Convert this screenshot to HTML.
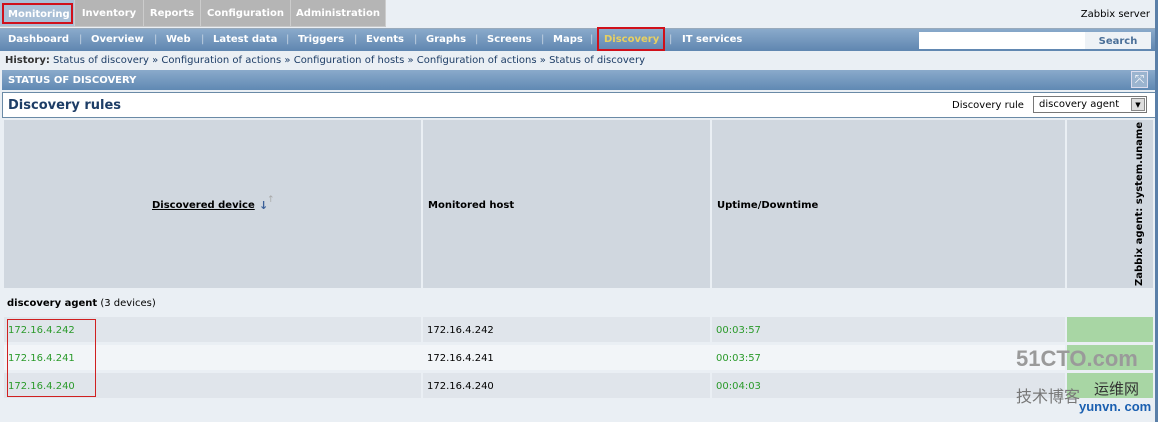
<!DOCTYPE html>
<html><head><style>
*{margin:0;padding:0;box-sizing:border-box}
body{width:1158px;height:422px;background:#eaeff4;font-family:"DejaVu Sans","Liberation Sans",sans-serif;font-size:10px;position:relative;overflow:hidden;color:#000}
.a{position:absolute;white-space:nowrap}
.tab{position:absolute;top:0;height:26px;background:#b5b5b5;color:#fff;font-weight:bold;line-height:28px;text-align:center;font-size:10px;border-right:1px solid #ccc}
.nav{position:absolute;top:28px;left:0;width:1158px;height:23px;background:linear-gradient(#8aaacb,#5f86b0);border-top:1px solid #9ab}
.nav span{position:absolute;top:5px;color:#fff;font-weight:bold;font-size:10px}
.sep{color:#c5d3e2!important;font-weight:normal!important}
.hdr{background:#d0d7df;position:absolute;top:120px;height:168px}
.cell{position:absolute;height:25px;line-height:28px;padding-left:4px;font-size:10px}
</style></head><body>
<div class="a" style="left:0;top:0;width:386px;height:27px;background:#c8c8c8"></div>
<div class="tab" style="left:0;width:75px;background:#a9bfd6;"></div>
<div class="a" style="left:2px;top:3px;width:71px;height:21px;border:2px solid #d0101a;color:#fff;font-weight:bold;line-height:19px;padding-left:4px">Monitoring</div>
<div class="tab" style="left:75px;width:69px">Inventory</div>
<div class="tab" style="left:144px;width:57px">Reports</div>
<div class="tab" style="left:201px;width:90px">Configuration</div>
<div class="tab" style="left:291px;width:95px">Administration</div>
<div class="a" style="right:8px;top:9px">Zabbix server</div>
<div class="nav">
<span style="left:8px">Dashboard</span><span class="sep" style="left:79px">|</span>
<span style="left:91px">Overview</span><span class="sep" style="left:154px">|</span>
<span style="left:166px">Web</span><span class="sep" style="left:201px">|</span>
<span style="left:213px">Latest data</span><span class="sep" style="left:286px">|</span>
<span style="left:298px">Triggers</span><span class="sep" style="left:354px">|</span>
<span style="left:366px">Events</span><span class="sep" style="left:414px">|</span>
<span style="left:426px">Graphs</span><span class="sep" style="left:475px">|</span>
<span style="left:487px">Screens</span><span class="sep" style="left:541px">|</span>
<span style="left:553px">Maps</span><span class="sep" style="left:590px">|</span>
<span style="left:604px;color:#e8d060">Discovery</span><span class="sep" style="left:669px">|</span>
<span style="left:682px">IT services</span>
</div>
<div class="a" style="left:597px;top:27px;width:68px;height:24px;border:2px solid #d0101a"></div>
<div class="a" style="left:919px;top:32px;width:166px;height:17px;background:#fff"></div>
<div class="a" style="left:1085px;top:32px;width:66px;height:17px;background:#eef2f6;color:#4a6f98;font-weight:bold;text-align:center;line-height:19px">Search</div>
<div class="a" style="left:5px;top:55px;color:#1d3d66"><b style="color:#333">History:</b> Status of discovery » Configuration of actions » Configuration of hosts » Configuration of actions » Status of discovery</div>
<div class="a" style="left:2px;top:70px;width:1154px;height:20px;background:linear-gradient(#8aaacb,#6089b3);color:#fff;font-weight:bold;line-height:21px;padding-left:6px">STATUS OF DISCOVERY</div>
<div class="a" style="left:1131px;top:71px;width:17px;height:17px;border:1px solid #dde;background:#9bb4cf;color:#fff;font-size:12px;line-height:15px;text-align:center">⤧</div>
<div class="a" style="left:2px;top:92px;width:1154px;height:26px;background:#fff;border:1px solid #6a8aa6"></div>
<div class="a" style="left:8px;top:98px;font-size:13px;font-weight:bold;color:#1d3d66">Discovery rules</div>
<div class="a" style="left:952px;top:100px">Discovery rule</div>
<div class="a" style="left:1033px;top:96px;width:114px;height:17px;border:1px solid #777;background:#fff;padding-left:5px;line-height:16px">discovery agent</div>
<div class="a" style="left:1131px;top:98px;width:14px;height:13px;border:1px solid #888;background:#ddd;font-size:7px;text-align:center;line-height:12px">▼</div>
<div class="hdr" style="left:4px;width:417px"></div>
<div class="hdr" style="left:423px;width:287px"></div>
<div class="hdr" style="left:712px;width:353px"></div>
<div class="hdr" style="left:1067px;width:86px"></div>
<div class="a" style="left:152px;top:200px;font-weight:bold;text-decoration:underline">Discovered device</div>
<div class="a" style="left:259px;top:199px;color:#3a5f99;font-weight:bold;font-size:11px">↓</div><div class="a" style="left:267px;top:195px;color:#aaa;font-size:9px">↑</div>
<div class="a" style="left:428px;top:200px;font-weight:bold">Monitored host</div>
<div class="a" style="left:717px;top:200px;font-weight:bold">Uptime/Downtime</div>
<div class="a" style="left:1134px;top:286px;transform:rotate(-90deg);transform-origin:0 0;font-weight:bold">Zabbix agent: system.uname</div>
<div class="a" style="left:7px;top:298px"><b>discovery agent</b> (3 devices)</div>
<div class="a" style="left:4px;top:317px;width:417px;height:25px;background:#e0e5eb"></div>
<div class="a" style="left:423px;top:317px;width:287px;height:25px;background:#e0e5eb"></div>
<div class="a" style="left:712px;top:317px;width:353px;height:25px;background:#e0e5eb"></div>
<div class="a" style="left:4px;top:373px;width:417px;height:25px;background:#e0e5eb"></div>
<div class="a" style="left:423px;top:373px;width:287px;height:25px;background:#e0e5eb"></div>
<div class="a" style="left:712px;top:373px;width:353px;height:25px;background:#e0e5eb"></div>
<div class="a" style="left:4px;top:345px;width:1061px;height:25px;background:#f2f5f8"></div>
<div class="a" style="left:1067px;top:317px;width:86px;height:25px;background:#a8d6a4"></div>
<div class="a" style="left:1067px;top:345px;width:86px;height:25px;background:#a8d6a4"></div>
<div class="a" style="left:1067px;top:373px;width:86px;height:25px;background:#a8d6a4"></div>
<div class="cell" style="left:4px;top:317px;color:#2a9a2a">172.16.4.242</div>
<div class="cell" style="left:4px;top:345px;color:#2a9a2a">172.16.4.241</div>
<div class="cell" style="left:4px;top:373px;color:#2a9a2a">172.16.4.240</div>
<div class="cell" style="left:423px;top:317px">172.16.4.242</div>
<div class="cell" style="left:423px;top:345px">172.16.4.241</div>
<div class="cell" style="left:423px;top:373px">172.16.4.240</div>
<div class="cell" style="left:712px;top:317px;color:#2a9a2a">00:03:57</div>
<div class="cell" style="left:712px;top:345px;color:#2a9a2a">00:03:57</div>
<div class="cell" style="left:712px;top:373px;color:#2a9a2a">00:04:03</div>
<div class="a" style="left:7px;top:319px;width:89px;height:78px;border:1px solid #d02020"></div>
<div class="a" style="left:1016px;top:346px;font-size:22px;font-weight:bold;color:#9a9a9a;font-family:'Liberation Sans',sans-serif">51CTO.com</div>
<div class="a" style="left:1016px;top:383px;font-size:16px;color:#777;font-family:'Liberation Sans','Noto Sans CJK SC',sans-serif">技术博客</div>
<div class="a" style="left:1094px;top:378px;font-size:15px;color:#333;font-family:'Liberation Sans','Noto Sans CJK SC',sans-serif">运维网</div>
<div class="a" style="left:1079px;top:399px;font-size:13px;font-weight:bold;color:#1a5fb0;font-family:'Liberation Sans',sans-serif">yunvn. com</div>
<div class="a" style="left:1155px;top:0;width:3px;height:422px;background:#5a7fa8"></div>
</body></html>
